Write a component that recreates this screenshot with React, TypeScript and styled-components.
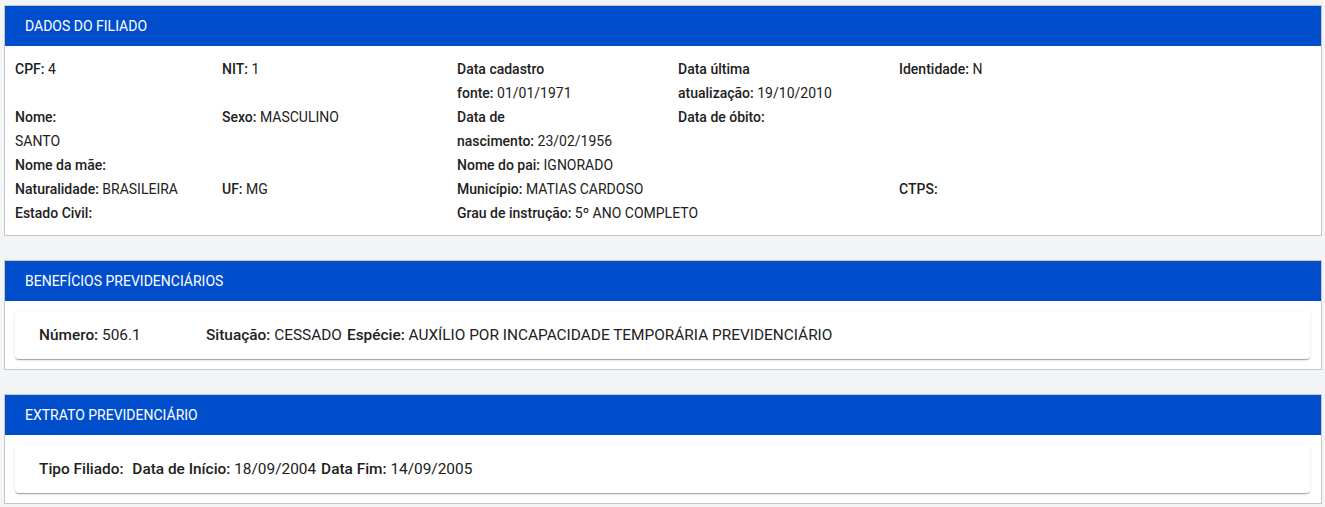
import React from 'react';
import styled, { createGlobalStyle } from 'styled-components';

const GlobalStyle = createGlobalStyle`
  body {
    margin: 0;
    background: #f3f4f6;
    font-family: Roboto, "Liberation Sans", Arial, sans-serif;
    color: #212121;
  }
`;

const Page = styled.div`
  display: flex;
  flex-direction: column;
  gap: 24px;
  padding: 5px 3px 0 4px;
`;

const Panel = styled.section`
  background: #fff;
  border: 1px solid #c6c7c9;
`;

const PanelHeader = styled.header`
  height: 40px;
  display: flex;
  align-items: center;
  padding-left: 20px;
  background: #004ecc;
  color: #fff;
  font-size: 14px;
  text-transform: uppercase;
`;

const InfoGrid = styled.div`
  display: grid;
  grid-template-columns: 207px 235px 221px 221px 1fr;
  padding: 11px 10px 10px 10px;
  font-size: 14px;
  line-height: 24px;
`;

const Cell = styled.div`
  white-space: nowrap;
`;

const Label = styled.span`
  font-weight: 500;
`;

const CardWrap = styled.div`
  padding: 10px 11px 10px 10px;
`;

const Card = styled.div`
  display: flex;
  align-items: center;
  height: 48px;
  padding: 0 24px;
  background: #fff;
  border-radius: 4px;
  box-shadow: 0 2px 1px -1px rgba(0, 0, 0, 0.2), 0 1px 1px 0 rgba(0, 0, 0, 0.14),
    0 1px 3px 0 rgba(0, 0, 0, 0.12);
  font-size: 15.4px;
`;

const Field = styled.span<{ $width?: number }>`
  white-space: pre;
  margin-right: 5px;
  ${(p) => (p.$width ? `width: ${p.$width}px; flex: none;` : '')}
`;

type Item = { label: string; value?: React.ReactNode; breakLabel?: string };

function Info({ label, value, breakLabel }: Item) {
  return (
    <Cell>
      {breakLabel && (
        <>
          <Label>{breakLabel}</Label>
          <br />
        </>
      )}
      <Label>{label}</Label> {value}
    </Cell>
  );
}

export default function App() {
  return (
    <>
      <GlobalStyle />
      <Page>
        <Panel>
          <PanelHeader>Dados do filiado</PanelHeader>
          <InfoGrid>
            <Info label="CPF:" value="4" />
            <Info label="NIT:" value="1" />
            <Info breakLabel="Data cadastro" label="fonte:" value="01/01/1971" />
            <Info breakLabel="Data última" label="atualização:" value="19/10/2010" />
            <Info label="Identidade:" value="N" />

            <Cell>
              <Label>Nome:</Label>
              <br />
              SANTO
            </Cell>
            <Info label="Sexo:" value="MASCULINO" />
            <Info breakLabel="Data de" label="nascimento:" value="23/02/1956" />
            <Info label="Data de óbito:" />
            <Cell />

            <Info label="Nome da mãe:" />
            <Cell />
            <Info label="Nome do pai:" value="IGNORADO" />
            <Cell />
            <Cell />

            <Info label="Naturalidade:" value="BRASILEIRA" />
            <Info label="UF:" value="MG" />
            <Info label="Município:" value="MATIAS CARDOSO" />
            <Cell />
            <Info label="CTPS:" />

            <Info label="Estado Civil:" />
            <Cell />
            <Info label="Grau de instrução:" value="5º ANO COMPLETO" />
          </InfoGrid>
        </Panel>

        <Panel>
          <PanelHeader>Benefícios previdenciários</PanelHeader>
          <CardWrap>
            <Card>
              <Field $width={162}>
                <Label>Número:</Label> 506.1
              </Field>
              <Field>
                <Label>Situação:</Label> CESSADO
              </Field>
              <Field>
                <Label>Espécie:</Label> AUXÍLIO POR INCAPACIDADE TEMPORÁRIA PREVIDENCIÁRIO
              </Field>
            </Card>
          </CardWrap>
        </Panel>

        <Panel>
          <PanelHeader>Extrato previdenciário</PanelHeader>
          <CardWrap>
            <Card>
              <Field>
                <Label>Tipo Filiado:</Label>{' '}
              </Field>
              <Field>
                <Label>Data de Início:</Label> 18/09/2004
              </Field>
              <Field>
                <Label>Data Fim:</Label> 14/09/2005
              </Field>
            </Card>
          </CardWrap>
        </Panel>
      </Page>
    </>
  );
}
